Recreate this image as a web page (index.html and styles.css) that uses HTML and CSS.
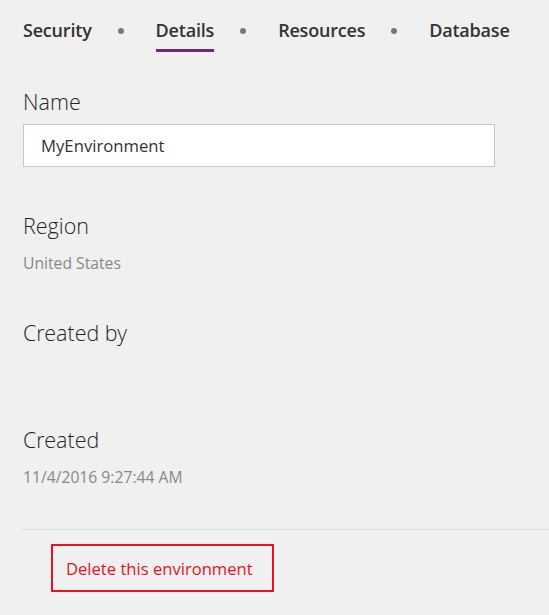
FILE: index.html
```html
<!DOCTYPE html>
<html lang="en">
<head>
<meta charset="utf-8">
<title>Environment details</title>
<link rel="stylesheet" href="styles.css">
</head>
<body>
<nav class="tabs">
  <a class="tab">Security</a>
  <span class="dot"></span>
  <a class="tab active">Details</a>
  <span class="dot"></span>
  <a class="tab">Resources</a>
  <span class="dot"></span>
  <a class="tab">Database</a>
</nav>

<section class="field field-name">
  <div class="label">Name</div>
  <input class="text-input" type="text" value="MyEnvironment">
</section>

<section class="field">
  <div class="label">Region</div>
  <div class="value">United States</div>
</section>

<section class="field">
  <div class="label">Created by</div>
  <div class="value"></div>
</section>

<section class="field">
  <div class="label">Created</div>
  <div class="value">11/4/2016 9:27:44 AM</div>
</section>

<hr class="separator">

<button class="delete-btn" type="button">Delete this environment</button>
</body>
</html>
```

FILE: styles.css
```css
html, body {
  margin: 0;
  padding: 0;
}

body {
  background: #f0f0f0;
  font-family: "Open Sans", "Noto Sans", "Liberation Sans", sans-serif;
  color: #252423;
  padding-left: 23px;
  width: 526px;
  height: 615px;
  overflow: hidden;
}

.tabs {
  display: flex;
  align-items: flex-start;
  padding-top: 16px;
}

.tab {
  font-size: 18px;
  font-weight: 600;
  line-height: 28px;
  letter-spacing: -0.2px;
  color: #333333;
  padding-bottom: 5px;
  border-bottom: 3px solid transparent;
}

.tab.active {
  border-bottom-color: #742774;
}

.dot {
  width: 6px;
  height: 6px;
  border-radius: 50%;
  background: #777777;
  margin: 12px 32px 0 26px;
}

.field {
  margin-bottom: 45px;
}

.field-name {
  margin-top: 36px;
}

.label {
  font-family: "Open Sans Light", "Open Sans", "Noto Sans", sans-serif;
  font-size: 21.5px;
  font-weight: 300;
  line-height: 28px;
  color: #252423;
}

.text-input {
  display: block;
  box-sizing: border-box;
  margin-top: 8px;
  width: 472px;
  height: 43px;
  padding: 0 17px;
  border: 1px solid #c8c8c8;
  background: #ffffff;
  font-family: inherit;
  font-size: 16.7px;
  color: #333333;
  outline: none;
}

.value {
  margin-top: 12px;
  font-size: 15.7px;
  line-height: 22px;
  min-height: 22px;
  color: #8a8886;
}

.separator {
  border: 0;
  border-top: 1px solid #d8d8d8;
  margin: -4px 0 0 -1px;
}

.delete-btn {
  display: block;
  margin: 14px 0 0 28px;
  box-sizing: border-box;
  width: 223px;
  height: 48px;
  padding: 0 0 0 13px;
  text-align: left;
  background: transparent;
  border: 2px solid #e81123;
  font-family: inherit;
  font-size: 16.6px;
  color: #e81123;
  cursor: pointer;
}
```
